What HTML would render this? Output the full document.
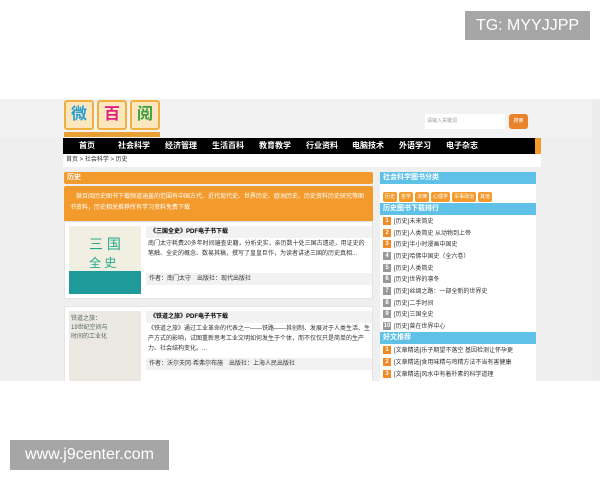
<!DOCTYPE html>
<html><head><meta charset="utf-8"><style>
*{margin:0;padding:0;box-sizing:border-box}
body{width:600px;height:480px;background:#fff;position:relative;overflow:hidden;font-family:"Liberation Sans","Noto Sans CJK SC",sans-serif;}
.a{position:absolute}
.tg{left:465px;top:11px;width:125px;height:29px;background:#a6a6a6;color:#fff;font-size:16px;line-height:29px;text-align:center}
.ww{left:10px;top:440px;width:159px;height:30px;background:#a6a6a6;color:#fff;font-size:16px;line-height:30px;text-align:center}
.shot{left:0;top:99px;width:600px;height:282px;background:#efefef;overflow:hidden}
.nav{left:63px;top:39px;width:472px;height:16px;background:#000;color:#fff;font-size:8px;font-weight:bold;line-height:16px}
.nav span{position:absolute;top:0}
.or{background:#f39a2c;color:#fff}
.bl{background:#5fc0e8;color:#fff;font-size:7px;font-weight:bold;line-height:12px;padding-left:3px}
.t{font-size:6px;color:#333;line-height:10px}
.li{left:383px;font-size:6px;color:#333;line-height:10px;white-space:nowrap}
.li b{display:inline-block;width:8px;height:8px;background:#999;color:#fff;font-size:6px;text-align:center;line-height:8px;margin-right:3px;vertical-align:middle}
.li b.o{background:#f08a24}
.tag{display:inline-block;background:#f39a2c;color:#fff;font-size:5px;padding:0 2px;height:10px;line-height:10px;margin-right:2px;border-radius:2px}
</style></head><body>
<div class="a tg">TG: MYYJJPP</div>
<div class="a shot">
 <div class="a" style="left:0;top:0;width:592px;height:39px;background:#f2f2f2"></div>
 <div class="a" style="left:64px;top:1px;width:96px;height:38px">
  <div class="a" style="left:0;top:0;width:30px;height:30px;background:#fbe6bd;border:2px solid #f0b040;border-radius:3px;font-size:16px;color:#2a9fd6;text-align:center;line-height:26px;font-weight:bold">微</div>
  <div class="a" style="left:33px;top:0;width:30px;height:30px;background:#fbe6bd;border:2px solid #f0b040;border-radius:3px;font-size:16px;color:#e02080;text-align:center;line-height:26px;font-weight:bold">百</div>
  <div class="a" style="left:66px;top:0;width:30px;height:30px;background:#fbe6bd;border:2px solid #f0b040;border-radius:3px;font-size:16px;color:#3aa040;text-align:center;line-height:26px;font-weight:bold">阅</div>
  <div class="a" style="left:0;top:32px;width:96px;height:5px;background:#e8a035"></div>
 </div>
 <div class="a" style="left:425px;top:15px;width:80px;height:15px;background:#fff;font-size:5px;color:#999;line-height:15px;padding-left:2px">请输入关键词</div>
 <div class="a" style="left:509px;top:15px;width:19px;height:15px;background:#e9822a;border-radius:3px;font-size:5px;color:#fff;text-align:center;line-height:15px">搜索</div>
 <div class="a" style="left:535px;top:39px;width:6px;height:16px;background:#f39a2c"></div>
 <div class="a nav"><span style="left:16px">首页</span><span style="left:55px">社会科学</span><span style="left:102px">经济管理</span><span style="left:149px">生活百科</span><span style="left:196px">教育教学</span><span style="left:243px">行业资料</span><span style="left:289px">电脑技术</span><span style="left:336px">外语学习</span><span style="left:383px">电子杂志</span></div>
 <div class="a t" style="left:63px;top:55px;width:478px;height:13px;background:#fff;padding-left:3px;line-height:13px">首页 &gt; 社会科学 &gt; 历史</div>
 <div class="a or" style="left:64px;top:73px;width:309px;height:12px;font-size:7px;font-weight:bold;line-height:12px;padding-left:3px;border-radius:2px">历史</div>
 <div class="a or" style="left:64px;top:87px;width:309px;height:40px;font-size:6px;line-height:11px;padding:6px 6px;border-radius:2px">　微百阅历史图书下载频道涵盖的范围有中国古代、近代现代史、世界历史、欧洲历史、历史资料历史研究等图书资料，历史相关推荐所有学习资料免费下载</div>
 <div class="a" style="left:64px;top:122px;width:309px;height:78px;background:#fff;border:1px solid #e4e4e4"></div>
 <div class="a" style="left:69px;top:127px;width:72px;height:68px;background:#f1eee2"><div class="a" style="left:0;top:45px;width:72px;height:23px;background:#1f9a9a"></div><div class="a" style="left:20px;top:8px;font-size:14px;color:#2a8">三 国</div><div class="a" style="left:20px;top:28px;font-size:12px;color:#2a8">全 史</div></div>
 <div class="a" style="left:146px;top:127px;width:226px;height:12px;background:#f2f2f2;font-size:6px;font-weight:bold;line-height:12px;padding-left:4px">《三国全史》PDF电子书下载</div>
 <div class="a t" style="left:148px;top:140px;width:222px">南门太守耗费20多年时间遍查史籍，分析史实，亲历数十处三国古遗迹，用证史的笔触、全史的概念、数易其稿，撰写了皇皇巨作，为读者讲述三国的历史真相...</div>
 <div class="a t" style="left:146px;top:174px;width:226px;height:12px;background:#f2f2f2;padding-left:3px;line-height:12px">作者：南门太守　出版社：现代出版社</div>
 <div class="a" style="left:64px;top:207px;width:309px;height:80px;background:#fff;border:1px solid #e4e4e4"></div>
 <div class="a" style="left:69px;top:212px;width:72px;height:70px;background:#ebe9e2;font-size:6px;color:#566;padding:2px">铁道之旅：<br>19世纪空间与<br>时间的工业化</div>
 <div class="a" style="left:146px;top:212px;width:226px;height:12px;background:#f2f2f2;font-size:6px;font-weight:bold;line-height:12px;padding-left:4px">《铁道之旅》PDF电子书下载</div>
 <div class="a t" style="left:148px;top:225px;width:222px">《铁道之旅》通过工业革命的代表之一——铁路——其创制、发展对于人类生活、生产方式的影响，试图重新思考工业文明如何发生于个体，而不仅仅只是简单的生产力、社会结构变化。...</div>
 <div class="a t" style="left:146px;top:259px;width:226px;height:12px;background:#f2f2f2;padding-left:3px;line-height:12px">作者：沃尔夫冈·希弗尔布施　出版社：上海人民出版社</div>
 <div class="a" style="left:380px;top:73px;width:156px;height:210px;background:#fff"></div>
 <div class="a bl" style="left:380px;top:73px;width:156px">社会科学图书分类</div>
 <div class="a" style="left:383px;top:86px"><span class="tag">历史</span><span class="tag">哲学</span><span class="tag">法律</span><span class="tag">心理学</span><span class="tag">军事政治</span><span class="tag">其他</span></div>
 <div class="a bl" style="left:380px;top:104px;width:156px">历史图书下载排行</div>
 <div class="a li" style="top:118px"><b class="o">1</b>[历史]未来简史</div>
 <div class="a li" style="top:130px"><b class="o">2</b>[历史]人类简史 从动物到上帝</div>
 <div class="a li" style="top:141px"><b class="o">3</b>[历史]半小时漫画中国史</div>
 <div class="a li" style="top:153px"><b>4</b>[历史]哈佛中国史（全六卷）</div>
 <div class="a li" style="top:165px"><b>5</b>[历史]人类简史</div>
 <div class="a li" style="top:176px"><b>6</b>[历史]世界的凛冬</div>
 <div class="a li" style="top:188px"><b>7</b>[历史]丝绸之路：一部全新的世界史</div>
 <div class="a li" style="top:200px"><b>8</b>[历史]二手时间</div>
 <div class="a li" style="top:211px"><b>9</b>[历史]三国全史</div>
 <div class="a li" style="top:223px"><b>10</b>[历史]曾在世界中心</div>
 <div class="a bl" style="left:380px;top:233px;width:156px">好文推荐</div>
 <div class="a li" style="top:247px"><b class="o">1</b>[文章精选]乐子期望不落空 基因检测让怀孕更</div>
 <div class="a li" style="top:259px"><b class="o">2</b>[文章精选]食用味精与鸡精方法不当有害健康</div>
 <div class="a li" style="top:271px"><b class="o">3</b>[文章精选]风水中有着朴素的科学道理</div>
 <div class="a" style="left:592px;top:0;width:8px;height:282px;background:#ececec"></div>
</div>
<div class="a ww">www.j9center.com</div>
</body></html>
